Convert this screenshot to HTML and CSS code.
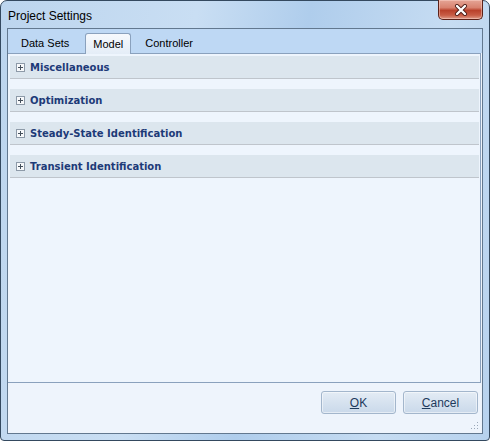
FILE: index.html
```html
<!DOCTYPE html>
<html>
<head>
<meta charset="utf-8">
<title>Project Settings</title>
<link rel="stylesheet" href="styles.css">
</head>
<body>
<div class="window">
  <div class="titlebar">
    <span class="title">Project Settings</span>
    <button class="close" aria-label="Close">
      <svg width="16" height="12" viewBox="0 0 16 12">
        <path d="M4 2 L12 10 M12 2 L4 10" stroke="#4a1a14" stroke-width="4" stroke-linecap="round" fill="none"/>
        <path d="M4 2 L12 10 M12 2 L4 10" stroke="#ffffff" stroke-width="2.4" stroke-linecap="round" fill="none"/>
      </svg>
    </button>
  </div>
  <div class="client">
    <div class="tabstrip">
      <div class="tab">Data Sets</div>
      <div class="tab selected">Model</div>
      <div class="tab">Controller</div>
    </div>
    <div class="panel">
      <div class="group"><span class="expander"></span><span class="group-label">Miscellaneous</span></div>
      <div class="group"><span class="expander"></span><span class="group-label">Optimization</span></div>
      <div class="group"><span class="expander"></span><span class="group-label">Steady-State Identification</span></div>
      <div class="group"><span class="expander"></span><span class="group-label">Transient Identification</span></div>
    </div>
    <div class="buttons">
      <button class="btn"><u>O</u>K</button>
      <button class="btn"><u>C</u>ancel</button>
      <svg class="grip" width="8" height="8" viewBox="0 0 8 8">
        <rect x="6" y="0" width="1" height="1" fill="#9aa8b8"/>
        <rect x="3" y="3" width="1" height="1" fill="#9aa8b8"/>
        <rect x="6" y="3" width="1" height="1" fill="#9aa8b8"/>
        <rect x="0" y="6" width="1" height="1" fill="#9aa8b8"/>
        <rect x="3" y="6" width="1" height="1" fill="#9aa8b8"/>
        <rect x="6" y="6" width="1" height="1" fill="#9aa8b8"/>
      </svg>
    </div>
  </div>
</div>
</body>
</html>
```

FILE: styles.css
```css
html, body {
  margin: 0;
  padding: 0;
  background: #ffffff;
}

.window {
  box-sizing: border-box;
  width: 490px;
  height: 441px;
  border: 1px solid #34495f;
  border-radius: 7px 7px 4px 4px;
  background: linear-gradient(100deg, #bcd5ee 0%, #c9def3 35%, #afcdec 55%, #c6dcf2 80%, #b7d2ee 100%);
  padding: 0 6px 6px 6px;
  display: flex;
  flex-direction: column;
  font-family: "Liberation Sans", Arial, sans-serif;
}

.titlebar {
  height: 27px;
  display: flex;
  align-items: flex-start;
  justify-content: space-between;
}

.title {
  font-size: 12px;
  color: #000;
  margin-top: 8px;
  margin-left: 1px;
}

.close {
  width: 45px;
  height: 20px;
  margin-top: -1px;
  margin-right: 0;
  padding: 0;
  border: 1px solid #5c2118;
  border-top: none;
  border-radius: 0 0 5px 5px;
  background: linear-gradient(180deg, #e5a596 0%, #d8826f 40%, #b9412b 55%, #c85c45 80%, #dd9a88 100%);
  box-shadow: inset 0 0 0 1px rgba(255, 220, 210, 0.45);
  display: flex;
  align-items: center;
  justify-content: center;
}

.client {
  flex: 1;
  display: flex;
  flex-direction: column;
  border: 1px solid #62788f;
  background: #eef4fc;
}

.tabstrip {
  height: 24px;
  background: #bed8f4;
  display: flex;
  align-items: flex-end;
  padding-left: 5px;
  font-size: 11px;
}

.tab {
  height: 20px;
  line-height: 20px;
  padding: 0 8px;
  color: #000;
}

.tab:first-child {
  margin-right: 8px;
}

.tab.selected {
  height: 21px;
  line-height: 21px;
  margin-bottom: -1px;
  margin-right: 6px;
  border: 1px solid #8aa1bd;
  border-bottom: none;
  border-radius: 3px 3px 0 0;
  background: linear-gradient(180deg, #f6f9fd 0%, #e4edf7 100%);
  position: relative;
  z-index: 1;
  box-sizing: border-box;
  padding: 0 7px;
}

.panel {
  height: 330px;
  box-sizing: border-box;
  margin-right: 1px;
  border: 1px solid #8aa1bd;
  border-left: none;
  background: #eef5fd;
  padding: 2px 1px 0 2px;
  display: flex;
  flex-direction: column;
  gap: 10px;
}

.group {
  height: 22px;
  background: #dce6ee;
  border-bottom: 1px solid #bfc5cc;
  display: flex;
  align-items: center;
  padding-left: 6px;
  gap: 5px;
}

.expander {
  box-sizing: border-box;
  width: 9px;
  height: 9px;
  border: 1px solid #8d9aa8;
  background:
    linear-gradient(#45505c, #45505c) center / 5px 1px no-repeat,
    linear-gradient(#45505c, #45505c) center / 1px 5px no-repeat,
    #f7f9fb;
}

.group-label {
  font-family: "DejaVu Sans", Verdana, sans-serif;
  font-size: 10px;
  font-weight: bold;
  color: #1d3a78;
}

.buttons {
  flex: 1;
  display: flex;
  justify-content: flex-end;
  align-items: flex-start;
  padding: 8px 4px 0 0;
  gap: 7px;
  position: relative;
}

.btn {
  width: 75px;
  height: 23px;
  padding: 0;
  border: 1px solid #a3b6cc;
  border-radius: 3px;
  background: linear-gradient(180deg, #e4ecf5 0%, #d6e2ef 50%, #cad9ea 100%);
  box-shadow: inset 0 0 0 1px rgba(255, 255, 255, 0.5);
  font-family: "Liberation Sans", Arial, sans-serif;
  font-size: 12px;
  color: #1e3a5c;
}

.grip {
  position: absolute;
  right: 3px;
  bottom: 3px;
}
```
